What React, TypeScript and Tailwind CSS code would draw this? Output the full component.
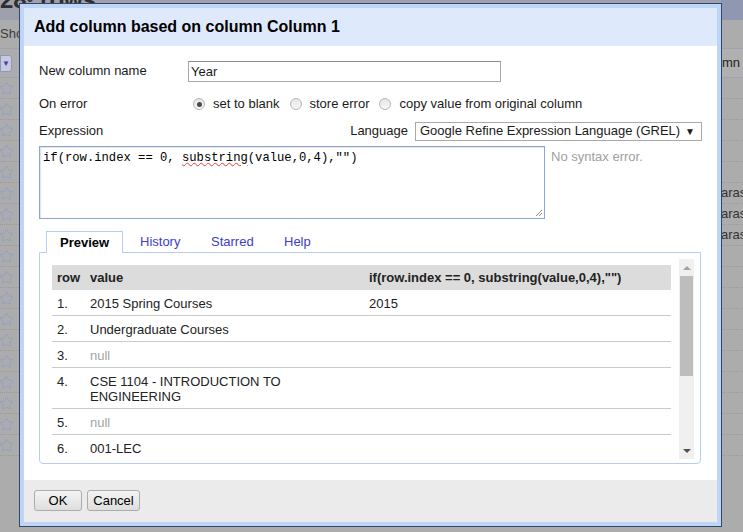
import React from 'react';
import { Star } from 'lucide-react';

const previewRows = [
  { n: '1.', value: '2015 Spring Courses', result: '2015' },
  { n: '2.', value: 'Undergraduate Courses', result: '' },
  { n: '3.', value: null, result: '' },
  { n: '4.', value: 'CSE 1104 - INTRODUCTION TO|ENGINEERING', result: '' },
  { n: '5.', value: null, result: '' },
  { n: '6.', value: '001-LEC', result: '' },
  { n: '7.', value: 'CSE 1105 - MAJOR', result: '' },
];

const Radio = ({ checked, label }: { checked?: boolean; label: string }) => (
  <label className="flex items-center mr-[10px]">
    <span className="w-[12px] h-[12px] rounded-full border border-[#b5b5b5] bg-gradient-to-b from-[#e6e6e6] to-[#f8f8f8] flex items-center justify-center">
      {checked && <span className="w-[5px] h-[5px] rounded-full bg-[#4a4a4a]" />}
    </span>
    <span className="ml-[8px]">{label}</span>
  </label>
);

const Backdrop = () => (
  <div className="flex flex-col h-full text-[13px] text-[#333]">
    <div className="h-[20px] flex bg-[#9ea1ab] overflow-hidden">
      <div className="text-[24px] font-bold leading-none -mt-[12px] text-[#2e2e2e] whitespace-nowrap">
        28<sup className="text-[12px]">0</sup> rows
      </div>
      <div className="ml-auto w-[22px] bg-[#8f97b1]" />
    </div>
    <div className="flex h-[28px] items-center">
      <span className="text-[#3c3c3c]">Sho</span>
    </div>
    <div className="flex h-[30px] border-y border-[#9da3b4]">
      <div className="w-[12px] mt-[6px] h-[17px] rounded-r-[3px] bg-[#c4cbe0] border border-[#8e97b8] flex items-center justify-center">
        <span className="text-[8px] text-[#4b3a9e]">▼</span>
      </div>
      <div className="ml-auto w-[22px] bg-[#b0b0b0] flex items-center overflow-hidden text-[#222] whitespace-nowrap">
        <span className="pl-[1px]">mn 4</span>
      </div>
    </div>
    {Array.from({ length: 18 }).map((_, i) => (
      <div key={i} className="flex h-[21px] border-b border-dotted border-[#9a9a9a]">
        <div className="w-[19px] flex items-center">
          <Star size={15} strokeWidth={1.2} className="text-[#8b9ccb] -ml-[1px]" />
        </div>
        <div className="ml-auto w-[22px] flex items-center text-[#333] whitespace-nowrap overflow-hidden">
          {i >= 5 && i <= 7 ? 'aras' : ''}
        </div>
      </div>
    ))}
  </div>
);

const PreviewTable = () => (
  <div className="flex h-[200px] bg-white">
    <div className="flex-1 overflow-hidden pl-[6px] pr-[8px] pt-[6px]">
      <div className="grid grid-cols-[33px_279px_1fr] bg-[#dcdcdc] h-[25px] items-center font-bold text-[#222]">
        <span className="pl-[5px]">row</span>
        <span className="pl-[5px]">value</span>
        <span className="pl-[5px]">if(row.index == 0, substring(value,0,4),"")</span>
      </div>
      {previewRows.map((r) => (
        <div key={r.n} className="grid grid-cols-[33px_279px_1fr] border-b border-[#cacaca] pt-[6px] pb-[4px] leading-[15px] text-[#222]">
          <span className="pl-[5px]">{r.n}</span>
          <span className="pl-[5px]">
            {r.value === null ? (
              <span className="text-[#a4a4a4]">null</span>
            ) : (
              r.value.split('|').map((line) => <div key={line}>{line}</div>)
            )}
          </span>
          <span className="pl-[5px]">{r.result}</span>
        </div>
      ))}
    </div>
    <div className="w-[15px] bg-[#f0f0f0] flex flex-col items-center">
      <div className="h-[17px] flex items-center justify-center">
        <span className="w-0 h-0 border-x-[4px] border-x-transparent border-b-[4px] border-b-[#a3a3a3]" />
      </div>
      <div className="w-[13px] h-[100px] bg-[#bdbdbd]" />
      <div className="mt-auto h-[17px] flex items-center justify-center">
        <span className="w-0 h-0 border-x-[4px] border-x-transparent border-t-[4px] border-t-[#505050]" />
      </div>
    </div>
  </div>
);

export default function App() {
  return (
    <div className="relative w-[743px] h-[532px] overflow-hidden bg-[#acacac] font-['Liberation_Sans',Arial,sans-serif]">
      <Backdrop />

      <div className="absolute left-[19px] top-[3px] w-[703px] h-[524px] border border-[#30496a] bg-[#bfd5f7] p-[4px] text-[13px] text-[#1a1a1a]">
        <div className="flex flex-col h-full">
          <div className="h-[38px] bg-[#dee9fc] flex items-center pl-[10px]">
            <h1 className="text-[16px] font-bold text-black">Add column based on column Column 1</h1>
          </div>

          <div className="flex-1 bg-white px-[15px] pt-[15px]">
            <div className="flex items-center h-[20px]">
              <span className="w-[149px]">New column name</span>
              <div className="w-[313px] h-[21px] border border-[#a9a9a9] border-t-[#8c8c8c] pl-[2px] leading-[19px]">Year</div>
            </div>

            <div className="flex items-center h-[20px] mt-[13px]">
              <span className="w-[154px]">On error</span>
              <Radio checked label="set to blank" />
              <Radio label="store error" />
              <Radio label="copy value from original column" />
            </div>

            <div className="flex items-center h-[20px] mt-[7px]">
              <span>Expression</span>
              <span className="ml-auto mr-[7px]">Language</span>
              <div className="w-[287px] h-[19px] border border-[#a9a9a9] flex items-center pl-[4px] pr-[6px]">
                <span>Google Refine Expression Language (GREL)</span>
                <span className="ml-auto text-[10px]">▼</span>
              </div>
            </div>

            <div className="flex mt-[5px]">
              <div className="relative w-[506px] h-[73px] border border-[#86a6dc] shadow-[inset_1px_1px_1px_rgba(0,0,0,0.12)] pl-[3px] pt-[3px] font-['Liberation_Mono',monospace] text-[12.2px] leading-[16px] text-black">
                if(row.index == 0, <span className="underline decoration-wavy decoration-[#e04040] decoration-1">substring</span>(value,0,4),"")
                <svg className="absolute right-[1px] bottom-[1px]" width="9" height="9" viewBox="0 0 9 9">
                  <path d="M8 2L2 8M8 5L5 8" stroke="#888" strokeWidth="1" />
                </svg>
              </div>
              <span className="ml-[6px] mt-[1px] text-[#a0a0a0]">No syntax error.</span>
            </div>

            <div className="mt-[12px] w-[662px]">
              <div className="flex h-[21px] pl-[7px]">
                <div className="w-[77px] border border-b-0 border-[#b6cdf3] bg-white pl-[13px] flex items-center font-bold text-black -mb-[1px] relative z-10 h-[22px]">
                  Preview
                </div>
                <div className="ml-[4px] w-[71px] pl-[13px] flex items-center text-[#3d3dc9]">History</div>
                <div className="w-[73px] pl-[13px] flex items-center text-[#3d3dc9]">Starred</div>
                <div className="pl-[13px] flex items-center text-[#3d3dc9]">Help</div>
              </div>
              <div className="border border-[#b6cdf3] rounded-b-[4px] px-[6px] pt-[6px] pb-[4px]">
                <PreviewTable />
              </div>
            </div>
          </div>

          <div className="h-[42px] bg-[#ebebeb] flex items-start pl-[10px] pt-[10px] gap-[5px]">
            <button className="w-[48px] h-[21px] rounded-[3px] border border-[#acacac] bg-gradient-to-b from-[#f4f4f4] to-[#dedede] text-black">OK</button>
            <button className="w-[53px] h-[21px] rounded-[3px] border border-[#acacac] bg-gradient-to-b from-[#f4f4f4] to-[#dedede] text-black">Cancel</button>
          </div>
        </div>
      </div>
    </div>
  );
}
